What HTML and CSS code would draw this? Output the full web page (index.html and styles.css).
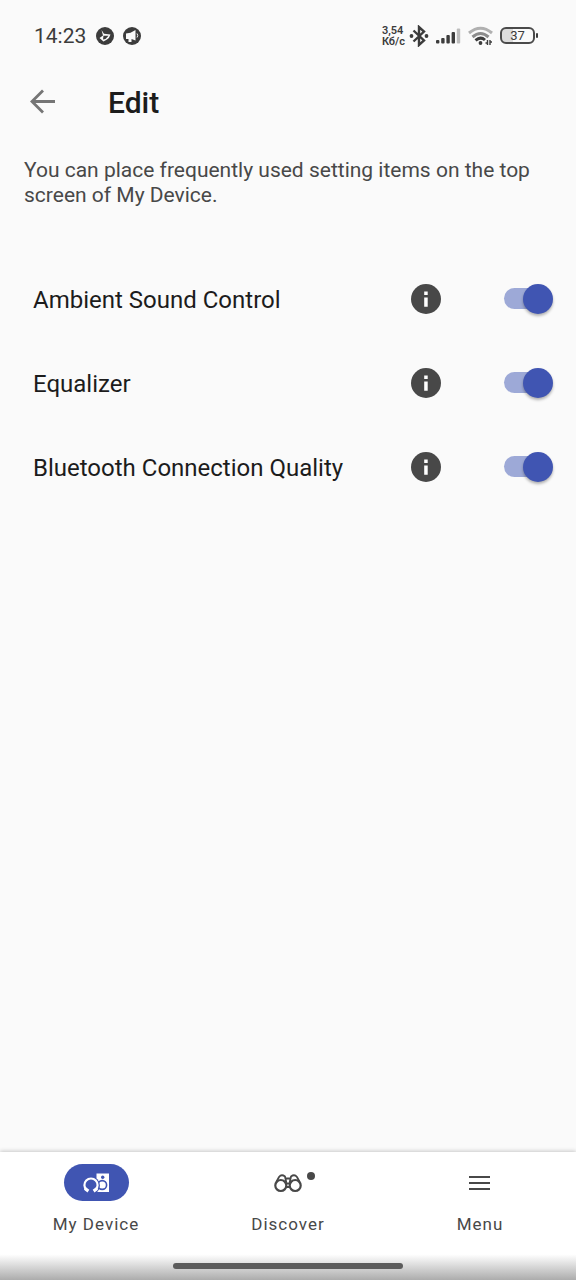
FILE: index.html
```
<!DOCTYPE html>
<html lang="en">
<head>
<meta charset="utf-8">
<meta name="viewport" content="width=device-width, initial-scale=1">
<title>Edit</title>
<link rel="stylesheet" href="styles.css">
</head>
<body>
<div class="status-bar">
  <span class="clock">14:23</span>
  <svg class="status-badge" viewBox="0 0 18 18" aria-hidden="true">
    <circle cx="9" cy="9" r="9" fill="#3c3c3c"/>
    <path d="M5.500 3 8 6.800 14.500 7.500Q13.500 11 11 12.500L7.500 14.500 3.500 11 7 8.500Z" fill="#fafafa"/>
    <path d="M7.500 8.800h5l-3 3.200-2.500.5Z" fill="#3c3c3c"/>
  </svg>
  <svg class="status-badge" viewBox="0 0 18 18" aria-hidden="true">
    <circle cx="9" cy="9" r="9" fill="#3c3c3c"/>
    <path d="M3 6.500 7.500 5.800 12.500 3V13.500L8.500 12V15H5.500V12H3Z" fill="#fafafa"/>
    <path d="M14 6.500q1.500 2 0 4" fill="none" stroke="#fafafa"/>
  </svg>
  <div class="status-right">
    <span class="speed">3,54<br>Кб/с</span>
    <svg width="20" height="22" viewBox="0 0 20 22" aria-hidden="true">
      <path d="M4.500 5.500 15 15.500 10 20V2L15 6.500 4.500 16.500" fill="none" stroke="#3c3c3c" stroke-width="2.400"/>
      <circle cx="2.500" cy="11" r="1.900" fill="#3c3c3c"/><circle cx="17.500" cy="11" r="1.900" fill="#3c3c3c"/>
    </svg>
    <svg width="25" height="16" viewBox="0 0 25 16" aria-hidden="true">
      <g fill="#3c3c3c"><rect x="0" y="12" width="3.400" height="3.500" rx="1"/><rect x="5.200" y="10" width="3.400" height="5.500" rx="1"/><rect x="10.400" y="7" width="3.400" height="8.500" rx="1"/><rect x="15.600" y="4" width="3.400" height="11.500" rx="1"/></g>
      <rect x="20.800" y="0.500" width="3.400" height="15" rx="1" fill="#bdbdbd"/>
    </svg>
    <svg width="25" height="20" viewBox="0 0 25 20" aria-hidden="true">
      <g fill="none" stroke-width="3"><path d="M1 7Q12.500-2.500 24 7" stroke="#b0b0b0"/><path d="M4.500 11Q12.500 4 20.500 11" stroke="#8c8c8c"/><path d="M7.500 14.300Q12.500 10 17 14" stroke="#3c3c3c"/></g>
      <circle cx="12.500" cy="17" r="1.900" fill="#3c3c3c"/>
      <path d="M19.500 14v5M17.500 17h2M22 14v5M22 16h2" fill="none" stroke="#3c3c3c" stroke-width="1.400"/>
    </svg>
    <span class="battery">37</span>
  </div>
</div>

<header class="app-bar">
  <button class="back" type="button" aria-label="Back">
    <svg width="26" height="26" viewBox="0 0 26 26"><path d="M26 12.500H3.500M14 1.500 3 12.500 14 23.500" fill="none" stroke="#757575" stroke-width="2.800"/></svg>
  </button>
  <h1 class="title">Edit</h1>
</header>

<main class="content">
  <p class="intro">You can place frequently used setting items on the top screen of My Device.</p>
  <ul class="settings">
    <li class="setting">
      <label class="setting-name" for="ambient">Ambient Sound Control</label>
      <button class="info" type="button" aria-label="About Ambient Sound Control"><svg width="30" height="30" viewBox="0 0 30 30"><circle cx="15" cy="15" r="15" fill="#484848"/><path d="M13.200 7.500h3.500v3.500h-3.500zM13.200 13.500h3.500v9.200h-3.500z" fill="#fff"/></svg></button>
      <input class="switch" id="ambient" type="checkbox" role="switch" checked>
    </li>
    <li class="setting">
      <label class="setting-name" for="equalizer">Equalizer</label>
      <button class="info" type="button" aria-label="About Equalizer"><svg width="30" height="30" viewBox="0 0 30 30"><circle cx="15" cy="15" r="15" fill="#484848"/><path d="M13.200 7.500h3.500v3.500h-3.500zM13.200 13.500h3.500v9.200h-3.500z" fill="#fff"/></svg></button>
      <input class="switch" id="equalizer" type="checkbox" role="switch" checked>
    </li>
    <li class="setting">
      <label class="setting-name" for="quality">Bluetooth Connection Quality</label>
      <button class="info" type="button" aria-label="About Bluetooth Connection Quality"><svg width="30" height="30" viewBox="0 0 30 30"><circle cx="15" cy="15" r="15" fill="#484848"/><path d="M13.200 7.500h3.500v3.500h-3.500zM13.200 13.500h3.500v9.200h-3.500z" fill="#fff"/></svg></button>
      <input class="switch" id="quality" type="checkbox" role="switch" checked>
    </li>
  </ul>
</main>

<nav class="bottom-nav">
  <div class="tabs">
    <a class="tab" href="#device" aria-current="page">
      <span class="tab-icon selected">
        <svg width="28" height="24" viewBox="0 0 28 24" aria-hidden="true">
          <path d="M14.500 2.500H27V21H14.500Z" fill="#fff"/>
          <circle cx="20.700" cy="6.300" r="1.700" fill="#4055b2"/>
          <circle cx="20.200" cy="14" r="4.400" fill="none" stroke="#4055b2" stroke-width="1.600"/>
          <circle cx="9" cy="14.500" r="9" fill="#4055b2"/>
          <circle cx="19.800" cy="14" r="2" fill="#fff"/>
          <path d="M4.600 19A6.600 6.600 0 1 1 13.400 19" fill="none" stroke="#fff" stroke-width="2.200"/>
          <path d="m3 15.500 4.300 3.300-1.800 2.700-3.500-2.700ZM15 15.500l-4.300 3.300 1.800 2.700 3.500-2.700Z" fill="#fff"/>
        </svg>
      </span>
      <span class="tab-label">My Device</span>
    </a>
    <a class="tab" href="#discover">
      <span class="tab-icon">
        <svg width="28" height="20" viewBox="0 0 28 20" aria-hidden="true">
          <g fill="none" stroke="#484848" stroke-width="2.200"><circle cx="6.800" cy="12.500" r="5.500"/><circle cx="21.200" cy="12.500" r="5.500"/>
          <path d="M2.300 9 5 4Q7.500 .8 11 3.500L12.300 9.500M25.700 9 23 4Q20.500 .8 17 3.500L15.700 9.500M11.500 5.500h5M12 10.500h4M12 14h4" stroke-width="1.800"/></g>
        </svg>
        <span class="new-dot"></span>
      </span>
      <span class="tab-label">Discover</span>
    </a>
    <a class="tab" href="#menu">
      <span class="tab-icon">
        <svg width="22" height="16" viewBox="0 0 22 16" aria-hidden="true"><path d="M0 2h21M0 8h21M0 14h21" stroke="#484848" stroke-width="2"/></svg>
      </span>
      <span class="tab-label">Menu</span>
    </a>
  </div>
  <div class="gesture-area"><span class="gesture-handle"></span></div>
</nav>
</body>
</html>
```
FILE: styles.css
```
* { box-sizing: border-box; }

body {
  display: flex;
  flex-direction: column;
  min-height: 100vh;
  margin: 0;
  background: #fafafa;
  color: #1c1c1c;
  font-family: Roboto, "Noto Sans", sans-serif;
}

button {
  display: flex;
  padding: 0;
  border: 0;
  background: none;
  cursor: pointer;
}

.status-bar {
  display: flex;
  align-items: center;
  gap: 9px;
  height: 71px;
  padding: 0 38px 0 34px;
  color: #3c3c3c;
}

.clock { margin-right: 1px; font-size: 21px; }
.status-badge { width: 18px; height: 18px; }

.status-right {
  display: flex;
  align-items: center;
  gap: 7px;
  margin-left: auto;
}

.speed {
  margin-right: -3px;
  font-size: 11px;
  font-weight: 600;
  line-height: 11px;
}

.battery {
  position: relative;
  width: 35px;
  margin-right: 3px;
  border: 2px solid #4a4a4a;
  border-radius: 6px;
  background: linear-gradient(to right, #dcdcdc 37%, transparent 37%);
  font-size: 13px;
  line-height: 13px;
  text-align: center;
}

.battery::after {
  content: "";
  position: absolute;
  top: 4px;
  right: -5px;
  width: 2px;
  height: 5px;
  border-radius: 1px;
  background: #3c3c3c;
}

.app-bar {
  display: flex;
  align-items: center;
  gap: 53px;
  height: 62px;
  padding: 0 29px;
}

.title { margin: 0; font-size: 30px; font-weight: 500; }

.content { flex: 1; }

.intro {
  margin: 0;
  padding: 25px 24px;
  color: #484848;
  font-size: 21px;
  line-height: 25px;
}

.settings {
  margin: 0;
  padding: 24px 23px 0 33px;
  list-style: none;
}

.setting {
  display: flex;
  align-items: center;
  height: 84px;
}

.setting-name { flex: 1; padding-top: 2px; font-size: 24px; }
.info { margin-right: 63px; }

.switch {
  position: relative;
  width: 49px;
  height: 30px;
  margin: 0;
  appearance: none;
  cursor: pointer;
}

.switch::before {
  content: "";
  position: absolute;
  inset: 4px 7px 5px 0;
  border-radius: 11px;
  background: #bdbdbd;
}

.switch::after {
  content: "";
  position: absolute;
  top: 0;
  left: 0;
  width: 30px;
  height: 30px;
  border-radius: 50%;
  background: #f5f5f5;
  box-shadow: 0 2px 3px rgba(0, 0, 0, 0.3);
}

.switch:checked::before { background: #9da9d7; }
.switch:checked::after { right: 0; left: auto; background: #4055b2; }

.bottom-nav {
  background: #fff;
  box-shadow: 0 -1px 4px rgba(0, 0, 0, 0.2);
}

.tabs {
  display: grid;
  grid-template-columns: repeat(3, 1fr);
}

.tab {
  display: flex;
  flex-direction: column;
  align-items: center;
  gap: 11px;
  padding: 12px 0;
  color: #484848;
  text-decoration: none;
}

.tab-icon {
  position: relative;
  display: flex;
  align-items: center;
  justify-content: center;
  width: 65px;
  height: 37px;
  border-radius: 19px;
}

.selected { background: #4055b2; }

.new-dot {
  position: absolute;
  top: 8px;
  right: 6px;
  width: 8px;
  height: 8px;
  border-radius: 50%;
  background: #484848;
}

.tab-label {
  font-size: 17px;
  line-height: 24px;
  letter-spacing: 1px;
}

.gesture-area {
  display: flex;
  justify-content: center;
  align-items: center;
  height: 32px;
  padding-top: 4px;
  background: linear-gradient(#fff 20%, #acacac);
}

.gesture-handle {
  width: 40%;
  height: 6px;
  border-radius: 3px;
  background: #5c5c5c;
}
```
